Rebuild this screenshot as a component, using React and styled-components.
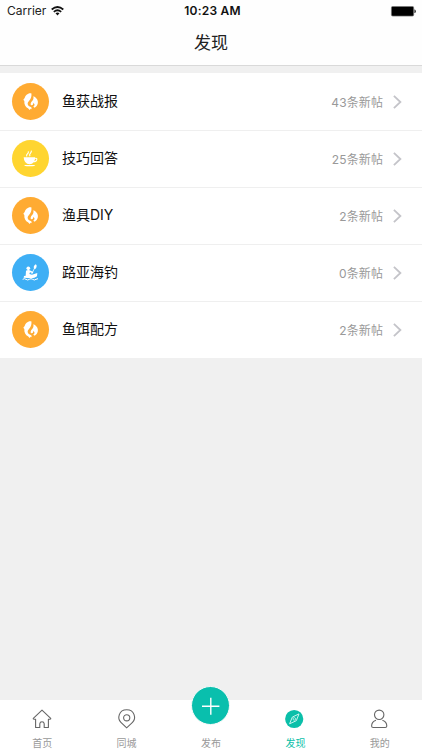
import React from "react";
import styled, { createGlobalStyle } from "styled-components";

const GlobalStyle = createGlobalStyle`
  * { box-sizing: border-box; }
  body {
    margin: 0;
    background: #f0f0f0;
    font-family: Inter, "Noto Sans CJK SC", sans-serif;
  }
`;

const Screen = styled.div`
  display: flex;
  flex-direction: column;
  width: 422px;
  height: 750px;
  overflow: hidden;
  background: #f0f0f0;
`;

const Header = styled.header`
  height: 66px;
  flex: none;
  background: #fefefe;
  border-bottom: 1px solid #d9d9d9;
`;

const StatusBar = styled.div`
  display: grid;
  grid-template-columns: 1fr auto 1fr;
  align-items: center;
  height: 22px;
  padding: 0 6px 0 7px;
  font-size: 12px;
  line-height: 22px;
  color: #222;
`;

const Carrier = styled.div`
  display: flex;
  align-items: center;
  gap: 5px;
`;

const Clock = styled.div`
  margin-left: 2px;
  font-size: 12px;
  font-weight: 600;
  letter-spacing: 0.2px;
  color: #111;
`;

const BatterySlot = styled.div`
  display: flex;
  justify-content: flex-end;
`;

const Title = styled.h1`
  margin: 0;
  height: 43px;
  line-height: 43px;
  text-align: center;
  font-size: 17px;
  font-weight: 400;
  color: #222;
`;

const List = styled.main`
  flex: none;
  margin-top: 7px;
  background: #fff;
`;

const Row = styled.div`
  display: flex;
  align-items: center;
  height: 57px;
  padding: 0 20px 1px 12px;
  border-top: 1px solid #efefef;

  &:first-child {
    border-top-color: #fff;
  }
`;

const Disc = styled.div`
  width: 37px;
  height: 37px;
  flex: none;
  border-radius: 50%;
  background: ${(p) => p.$color};
`;

const Name = styled.div`
  flex: 1;
  margin: 0 0 2px 13px;
  font-size: 14px;
  line-height: 20px;
  color: #111;
`;

const Count = styled.div`
  margin: 3px 10px 0 0;
  font-size: 12px;
  line-height: 18px;
  letter-spacing: 0.1px;
  color: #999;
`;

const TabBar = styled.nav`
  display: grid;
  grid-template-columns: repeat(5, 1fr);
  grid-template-rows: 50px;
  height: 50px;
  flex: none;
  margin-top: auto;
  background: #fff;
`;

const Tab = styled.div`
  display: flex;
  flex-direction: column;
  align-items: center;
  justify-content: flex-end;
  gap: ${(p) => (p.$raised ? "11px" : "7px")};
  color: ${(p) => (p.$active ? "#0bbfa9" : "#999")};
  font-size: 10px;
  line-height: 14px;
`;

const PublishButton = styled.div`
  display: flex;
  flex: none;
  width: 39px;
  height: 39px;
  border: 1px solid #fafafa;
  border-radius: 50%;
  background: #09bfad;
`;

const Glyph = styled.svg`
  display: block;
  flex: none;
  overflow: visible;
`;

const Wifi = () => (
  <Glyph width="13" height="10" viewBox="0 0 13 10" fill="none" stroke="#111" strokeWidth="1.7">
    <path d="M.7 3.5Q6.5-1.5 12.3 3.5M2.8 5.8Q6.5 2.7 10.2 5.8" />
    <path d="M4.5 7.3Q6.5 5.8 8.5 7.3L6.5 9.4Z" fill="#111" stroke="none" />
  </Glyph>
);

const Battery = () => (
  <Glyph width="25" height="11" viewBox="0 0 25 11">
    <rect x=".4" y=".5" width="22.3" height="9.6" rx="1.3" fill="#000" stroke="#777" strokeWidth=".7" />
    <path d="M23.4 3.5h.5q1 .4 1 1.8t-1 1.8h-.5z" fill="#333" />
  </Glyph>
);

const Fish = () => (
  <Glyph width="37" height="37" viewBox="0 0 111 111" fill="#fff">
    <path d="M58 31C48 29 40 37 38 45L34 50L37 54C36 65 41 72 48 76L53 81L56 77L59 79L58 73C51 71 46 66 47 61C49 54 61 47 58 31Z" />
    <path d="M64 40C74 44 80 53 77 63L74 69L68 74L64 71L68 66L65 59L62 66L57 67C54 63 57 58 60 55C65 50 65 46 64 40Z" />
  </Glyph>
);

const Cup = () => (
  <Glyph width="37" height="37" viewBox="0 0 111 111" fill="#fff">
    <g transform="translate(0 -2)">
      <path fillRule="evenodd" d="M35 54H69V56C73 54 77 56 76 61C75 67 70 69 65 69Q61 75 53 75Q36 74 35 54ZM69 59L67 65C71 65 73 62 73 60C73 58 71 58 69 59Z" />
      <path d="M36 77H70Q67 81 61 81H45Q39 81 36 77Z" />
      <path d="M45 51Q42 47 46 44T49 36M54 51Q51 46 55 42T58 34" fill="none" stroke="#fff" strokeWidth="3.4" />
    </g>
  </Glyph>
);

const Kayak = () => (
  <Glyph width="37" height="37" viewBox="0 0 111 111" fill="#fff">
    <circle cx="49" cy="43" r="5.5" />
    <path d="M42 50Q48 46 53 49L64 54L62 58L54 55L52 60L60 62L76 57L75 67Q68 73 58 73L35 71L36 66L41 65Z" />
    <path d="M59 60L69 40" fill="none" stroke="#fff" strokeWidth="2.4" />
    <path d="M66 44Q63 36 71 31Q77 35 71 44Z" />
    <path d="M32 76q5-4 10 0t10 0t10 0t10 0l6-2" fill="none" stroke="#fff" strokeWidth="3" />
  </Glyph>
);

const Chevron = () => (
  <Glyph width="9" height="14" viewBox="0 0 9 14" fill="none" stroke="#c4c4c9" strokeWidth="1.8">
    <path d="M.9 .8L7.4 7L.9 13.2" />
  </Glyph>
);

const Home = () => (
  <Glyph width="20" height="20" viewBox="0 0 20 20" fill="none" stroke="#666" strokeWidth="1.1" strokeLinejoin="round">
    <path d="M10 1.2L1.3 9.4Q1 10.2 2 10.2H3.6V18.5H7.8V14.8Q8 12.8 10 12.8T12.2 14.8V18.5H16.4V10.2H18Q19 10.2 18.7 9.4Z" />
  </Glyph>
);

const Pin = () => (
  <Glyph width="20" height="20" viewBox="0 0 20 20" fill="none" stroke="#666" strokeWidth="1.1">
    <path d="M9.7 18.8L3.9 13.3C0 9.5 1.7 .8 9.7 .8S19.4 9.5 15.5 13.3Z" />
    <circle cx="9.7" cy="8.8" r="3.1" />
  </Glyph>
);

const Plus = () => (
  <Glyph width="37" height="37" viewBox="0 0 37 37" stroke="#fff" strokeWidth="1.4">
    <path d="M10 19.2H27.4M18.8 10.7V27.7" />
  </Glyph>
);

const Compass = () => (
  <Glyph width="20" height="20" viewBox="0 0 20 20" fill="none">
    <circle cx="9.2" cy="10" r="9.1" fill="#0bbfa9" />
    <path d="M14 4.9L11.3 11.7L4.6 14.8L7.3 8.1Z" stroke="#dffaf5" strokeWidth=".9" />
    <circle cx="9.3" cy="9.9" r="1.3" stroke="#dffaf5" strokeWidth=".7" />
  </Glyph>
);

const Person = () => (
  <Glyph width="20" height="20" viewBox="0 0 20 20" fill="none" stroke="#666" strokeWidth="1.1">
    <circle cx="9.2" cy="5.8" r="4.7" />
    <path d="M6 11.3Q1.7 12.7 1.6 17Q1.6 18.5 3.2 18.5H15.2Q16.8 18.5 16.8 17Q16.7 12.7 12.4 11.3" />
  </Glyph>
);

const topics = [
  { name: "鱼获战报", count: 43, color: "#ffab32", Icon: Fish },
  { name: "技巧回答", count: 25, color: "#ffd530", Icon: Cup },
  { name: "渔具DIY", count: 2, color: "#ffab32", Icon: Fish },
  { name: "路亚海钓", count: 0, color: "#3eaff5", Icon: Kayak },
  { name: "鱼饵配方", count: 2, color: "#ffab32", Icon: Fish },
];

export default function App() {
  return (
    <Screen>
      <GlobalStyle />
      <Header>
        <StatusBar>
          <Carrier>Carrier <Wifi /></Carrier>
          <Clock>10:23 AM</Clock>
          <BatterySlot><Battery /></BatterySlot>
        </StatusBar>
        <Title>发现</Title>
      </Header>
      <List>
        {topics.map(({ name, count, color, Icon }) => (
          <Row key={name}>
            <Disc $color={color}><Icon /></Disc>
            <Name>{name}</Name>
            <Count>{count}条新帖</Count>
            <Chevron />
          </Row>
        ))}
      </List>
      <TabBar>
        <Tab><Home />首页</Tab>
        <Tab><Pin />同城</Tab>
        <Tab $raised><PublishButton><Plus /></PublishButton>发布</Tab>
        <Tab $active><Compass />发现</Tab>
        <Tab><Person />我的</Tab>
      </TabBar>
    </Screen>
  );
}
